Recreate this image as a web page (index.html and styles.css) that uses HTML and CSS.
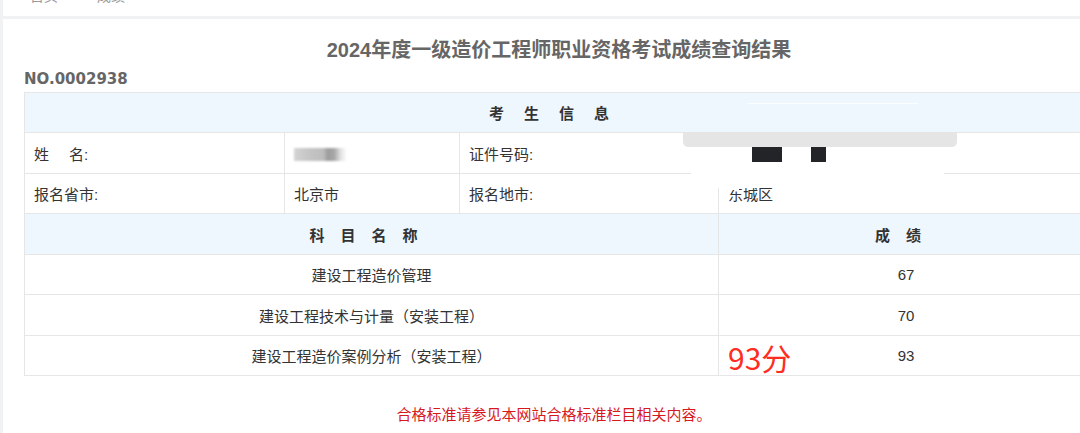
FILE: index.html
```html
<!DOCTYPE html>
<html lang="zh-CN">
<head>
<meta charset="utf-8">
<title>成绩查询结果</title>
<link rel="stylesheet" href="styles.css">
</head>
<body>
<div class="topbar">
  <span class="crumb">首页</span>
  <span class="crumb c2">成绩</span>
  <span class="crumb c3">查询结果</span>
</div>
<div class="card">
  <h1 class="title">2024年度一级造价工程师职业资格考试成绩查询结果</h1>
  <div class="no">NO.0002938</div>
  <div class="sheet">
    <div class="info">
      <div class="cell head span">考生信息</div>
      <div class="cell">姓<span class="gap"></span>名:</div>
      <div class="cell"><span class="blur"></span></div>
      <div class="cell">证件号码:</div>
      <div class="cell"></div>
      <div class="cell">报名省市:</div>
      <div class="cell">北京市</div>
      <div class="cell">报名地市:</div>
      <div class="cell">东城区</div>
    </div>
    <div class="scores">
      <div class="cell head center wide">科目名称</div>
      <div class="cell head center wide">成绩</div>
      <div class="cell center">建设工程造价管理</div>
      <div class="cell center">67</div>
      <div class="cell center">建设工程技术与计量（安装工程）</div>
      <div class="cell center">70</div>
      <div class="cell center">建设工程造价案例分析（安装工程）</div>
      <div class="cell center">93</div>
    </div>
    <div class="mask-band"></div>
    <div class="mask-white"></div>
    <div class="mask-nub"></div>
    <div class="mask-line"></div>
    <div class="black b1"></div>
    <div class="black b2"></div>
    <div class="mark">93分</div>
  </div>
  <p class="note">合格标准请参见本网站合格标准栏目相关内容。</p>
</div>
</body>
</html>
```
FILE: styles.css
```css
html, body {
  margin: 0;
  padding: 0;
}
body {
  background: #f1f2f4;
  overflow: hidden;
  font-family: "Liberation Sans", "Noto Sans CJK SC", sans-serif;
  color: #333;
}
.topbar {
  margin-left: 3px;
  height: 16px;
  background: #fff;
  overflow: hidden;
  display: flex;
  padding-left: 27px;
}
.crumb {
  font-size: 14px;
  line-height: 14px;
  margin-top: -11px;
  color: #9a9a9a;
}
.c2 { margin-left: 39px; }
.c3 { margin-left: 15px; font-size: 10px; }
.card {
  margin: 3px 0 0 3px;
  width: 1112px;
  min-height: 480px;
  box-sizing: border-box;
  padding: 17px 21px 40px;
  background: #fff;
}
.title {
  margin: 0;
  font-family: "Liberation Sans", "Noto Sans CJK SC", sans-serif;
  font-size: 20px;
  line-height: 28px;
  font-weight: bold;
  color: #666;
  text-align: center;
}
.no {
  font-family: "DejaVu Sans", sans-serif;
  font-weight: bold;
  font-size: 15px;
  line-height: 20px;
  color: #666;
  margin: 5px 0 3px;
}
.sheet {
  position: relative;
  border-top: 1px solid #e6e6e6;
  border-left: 1px solid #e6e6e6;
}
.info {
  display: grid;
  grid-template-columns: 260px 175px 259px 1fr;
  grid-template-rows: 40px 41px 40px;
}
.scores {
  display: grid;
  grid-template-columns: 694px 1fr;
  grid-template-rows: 41px 40px 41px 40px;
}
.cell {
  box-sizing: border-box;
  border-right: 1px solid #e6e6e6;
  border-bottom: 1px solid #e6e6e6;
  display: flex;
  align-items: center;
  padding-left: 9px;
  font-size: 15px;
  color: #333;
  white-space: nowrap;
}
.head {
  background: #eef6fe;
  font-weight: bold;
  justify-content: center;
  padding-left: 0;
}
.span {
  grid-column: 1 / -1;
  letter-spacing: 20px;
}
.wide {
  letter-spacing: 16px;
  padding-left: 16px;
}
.center {
  justify-content: center;
  padding-left: 0;
}
.gap {
  display: inline-block;
  width: 20px;
}
.blur {
  display: inline-block;
  width: 53px;
  height: 13px;
  margin-top: 2px;
  background: linear-gradient(90deg, #d4d4d4 0%, #c4c4c4 30%, #bdbdbd 55%, #9c9c9c 64%, #a8a8a8 76%, #e2e2e2 88%, rgba(255,255,255,0) 100%);
  filter: blur(1.2px);
}
.mask-band {
  position: absolute;
  left: 658px;
  top: 40px;
  width: 274px;
  height: 14px;
  background: #e5e5e5;
  border-radius: 0 0 5px 5px;
}
.mask-white {
  position: absolute;
  left: 666px;
  top: 54px;
  width: 253px;
  height: 41px;
  background: #fff;
  border-radius: 0 0 10px 10px;
}
.mask-nub {
  position: absolute;
  left: 700px;
  top: 94px;
  width: 14px;
  height: 3px;
  background: #fff;
}
.mask-line {
  position: absolute;
  left: 722px;
  top: 10px;
  width: 171px;
  height: 1px;
  background: rgba(255, 255, 255, 0.8);
}
.black {
  position: absolute;
  top: 54px;
  height: 15px;
  background: #232427;
}
.b1 { left: 727px; width: 30px; }
.b2 { left: 786px; width: 15px; }
.mark {
  position: absolute;
  left: 703px;
  top: 249px;
  font-family: "Noto Sans CJK SC", sans-serif;
  font-size: 30px;
  line-height: 1;
  color: #ff2d1f;
}
.note {
  margin: 29px 0 0;
  padding-right: 10px;
  text-align: center;
  font-size: 15px;
  line-height: 20px;
  color: #d7181f;
}
```
